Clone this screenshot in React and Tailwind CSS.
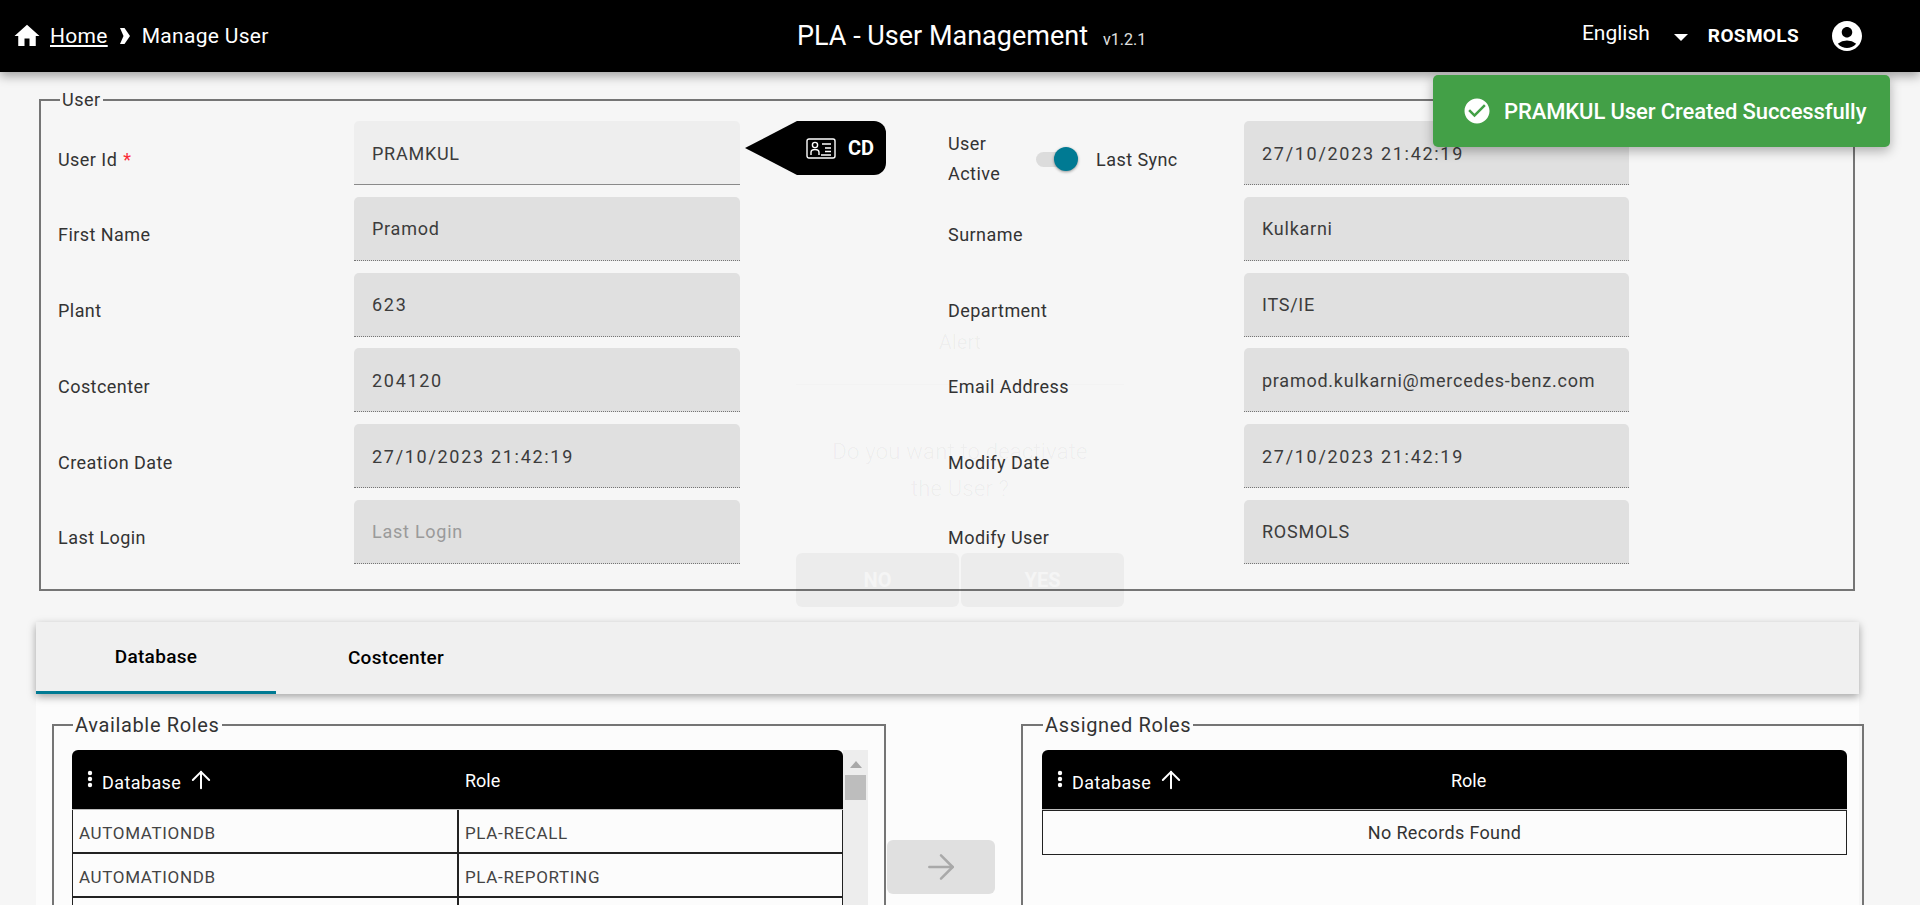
import { ArrowRight, ArrowUp } from "lucide-react";
import { MdAccountCircle, MdCheckCircle, MdHome } from "react-icons/md";

const rows = [
  { left: "First Name", leftValue: "Pramod", right: "Surname", rightValue: "Kulkarni" },
  { left: "Plant", leftValue: "623", right: "Department", rightValue: "ITS/IE" },
  { left: "Costcenter", leftValue: "204120", right: "Email Address", rightValue: "pramod.kulkarni@mercedes-benz.com" },
  { left: "Creation Date", leftValue: "27/10/2023 21:42:19", right: "Modify Date", rightValue: "27/10/2023 21:42:19" },
  { left: "Last Login", leftValue: "", placeholder: "Last Login", right: "Modify User", rightValue: "ROSMOLS" },
];

function Field({ value, placeholder, width, active }) {
  const numeric = /^\d/.test(value || "");
  return (
    <div
      className={`h-[64px] shrink-0 rounded-t-[5px] pl-[18px] pt-[1px] flex items-center text-[18px] ${
        numeric ? "tracking-[1.7px]" : "tracking-[0.75px]"
      } ${width} ${
        active
          ? "bg-[#eeeeee] border-b border-[#8a8a8a]"
          : "bg-[#e0e0e0] border-b border-dotted border-[#757575]"
      } ${value ? "text-[#3c3c3c]" : "text-[#9a9a9a]"}`}
    >
      {value || placeholder}
    </div>
  );
}

function Label({ children }) {
  return (
    <div className="-ml-[1px] mr-[1px] flex w-[295px] shrink-0 items-center pt-[12px] text-[18px] tracking-[0.45px]">
      {children}
    </div>
  );
}

function Kebab() {
  return (
    <svg width="6" height="18" viewBox="0 0 6 18" className="fill-white shrink-0">
      <circle cx="3" cy="3" r="2.2" />
      <circle cx="3" cy="9" r="2.2" />
      <circle cx="3" cy="15" r="2.2" />
    </svg>
  );
}

function IdCard() {
  return (
    <svg width="30" height="21" viewBox="0 0 30 21" fill="none" stroke="white" strokeWidth="1.4">
      <rect x="1" y="1" width="28" height="19" rx="2" />
      <circle cx="9" cy="7" r="2.6" />
      <path d="M5 17v-2.5c0-1.8 1.6-3 4-3s4 1.2 4 3V17" />
      <path d="M16 6h9M19 10h6M19 13.5h6M15 17h10" />
    </svg>
  );
}

function HeaderCell({ children }) {
  return (
    <div className="flex items-center pl-[15px]">
      <Kebab />
      <span className="ml-[9px] mt-[6px] text-[18px] tracking-[0.4px]">{children}</span>
      <ArrowUp size={28} strokeWidth={1.7} className="ml-[6px] mt-[2px]" />
    </div>
  );
}

function App() {
  return (
    <div className="relative h-screen overflow-hidden bg-[#f6f6f6] font-['Roboto',sans-serif] text-[#333333]">
      {/* Top bar */}
      <header className="relative z-10 flex h-[72px] items-center bg-black text-white shadow-[0_4px_10px_rgba(0,0,0,0.35)]">
        <div className="flex w-[797px] shrink-0 items-center pl-[12px] text-[21px] tracking-[0.3px]">
          <MdHome size={30} />
          <a className="ml-[8px] mt-[2px] underline underline-offset-2">Home</a>
          <svg width="12" height="16" viewBox="0 0 12 16" className="ml-[11px] fill-white">
            <path d="M1 0h4.500l5.500 8-5.500 8H1l3.500-8z" />
          </svg>
          <span className="ml-[11px] mt-[2px]">Manage User</span>
        </div>
        <div className="mt-[1px] text-[27px]">PLA - User Management</div>
        <div className="ml-[15px] mt-[8px] text-[16px] text-[#e0e0e0]">v1.2.1</div>
        <div className="ml-auto flex items-center pr-[55px]">
          <span className="-mt-[5px] text-[21px]">English</span>
          <span className="ml-[24px] mt-[2px] h-0 w-0 border-x-[7px] border-t-[7px] border-x-transparent border-t-white" />
          <span className="ml-[20px] text-[19px] tracking-[0.35px] font-bold">ROSMOLS</span>
          <MdAccountCircle size={36} className="ml-[30px]" />
        </div>
      </header>

      <main>
        {/* User details */}
        <fieldset className="ml-[39px] mr-[65px] mt-[16px] border-2 border-[#757575] px-[18px] pb-[25px] pt-[9px]">
          <legend className="ml-[1px] px-[2px] text-[18px] leading-[24px] tracking-[0.5px]">User</legend>

          <div className="flex flex-col gap-[11.8px]">
            <div className="flex h-[64px]">
              <Label>
                User Id <span className="ml-[6px] text-red-500">*</span>
              </Label>
              <Field value="PRAMKUL" width="w-[386px]" active />
              <div className="ml-[5px] flex h-[54px] w-[203px] shrink-0">
                <span className="h-0 w-0 border-y-[27px] border-r-[52px] border-y-transparent border-r-black" />
                <div className="flex h-[54px] w-[89px] items-center rounded-r-[12px] bg-black pl-[9px] text-[20px] font-bold text-white">
                  <IdCard />
                  <span className="ml-[12px]">CD</span>
                </div>
              </div>
              <div className="flex w-[296px] shrink-0 items-center pt-[12px] text-[18px] tracking-[0.45px]">
                <div className="w-[88px] leading-[30px]">
                  User
                  <br />
                  Active
                </div>
                <div className="relative h-[15px] w-[30px]">
                  <div className="h-[15px] w-[30px] rounded-full bg-[#dcdcdc]" />
                  <div className="absolute -top-[5px] left-[18px] h-[24px] w-[24px] rounded-full bg-[#007a93] shadow-[0_1px_3px_rgba(0,0,0,0.4)]" />
                </div>
                <span className="ml-[30px]">Last Sync</span>
              </div>
              <Field value="27/10/2023 21:42:19" width="w-[385px]" />
            </div>

            {rows.map((row) => (
              <div key={row.left} className="flex h-[64px]">
                <Label>{row.left}</Label>
                <Field value={row.leftValue} placeholder={row.placeholder} width="w-[386px]" />
                <div className="w-[208px] shrink-0" />
                <div className="flex w-[296px] shrink-0 items-center pt-[12px] text-[18px] tracking-[0.45px]">{row.right}</div>
                <Field value={row.rightValue} width="w-[385px]" />
              </div>
            ))}
          </div>
        </fieldset>

        {/* Tabs */}
        <div className="relative ml-[36px] mt-[31px] flex h-[72px] w-[1823px] bg-[#f0f0f0] text-[19px] font-medium tracking-[0.3px] text-black shadow-[0_3px_8px_rgba(0,0,0,0.35)]">
          <div className="flex w-[240px] items-center justify-center border-b-[3px] border-[#007a93] pt-[2px]">Database</div>
          <div className="flex w-[240px] items-center justify-center pb-[1px] pt-[1px]">Costcenter</div>
        </div>

        {/* Roles */}
        <div className="ml-[36px] flex h-[300px] w-[1823px] items-start bg-[#fcfcfc] pl-[16px] pt-[19px]">
          <fieldset className="w-[834px] shrink-0 border-2 border-[#757575] pb-[40px] pl-[18px] pr-[16px] pt-[13px]">
            <legend className="ml-[1px] px-[2px] text-[20px] leading-[24px] tracking-[0.65px]">Available Roles</legend>
            <div className="flex">
              <div className="w-[771px] shrink-0">
                <div className="grid h-[60px] grid-cols-[386px_1fr] rounded-t-[6px] border-b border-[#bdbdbd] bg-black text-white">
                  <HeaderCell>Database</HeaderCell>
                  <div className="flex items-center pl-[7px] pt-[3px] text-[18px]">Role</div>
                </div>
                {[
                  ["AUTOMATIONDB", "PLA-RECALL"],
                  ["AUTOMATIONDB", "PLA-REPORTING"],
                  ["\u00a0", "\u00a0"],
                ].map(([db, role], i) => (
                  <div
                    key={i}
                    className="grid h-[44px] grid-cols-[386px_1fr] border-b-2 border-l border-r border-[#222222] pt-[3px] text-[17px] tracking-[0.65px] text-[#444444] first:h-[46px] first:border-t"
                  >
                    <div className="-mt-[3px] flex items-center border-r-2 border-[#222222] pl-[6px] pt-[5px]">{db}</div>
                    <div className="flex items-center pl-[6px] pt-[2px]">{role}</div>
                  </div>
                ))}
              </div>
              <div className="relative h-[200px] w-[25px] shrink-0 bg-[#ededed]">
                <span className="absolute left-[7px] top-[11px] h-0 w-0 border-x-[6px] border-b-[7px] border-x-transparent border-b-[#a8a8a8]" />
                <div className="absolute left-[2px] top-[25px] h-[25px] w-[21px] bg-[#bdbdbd]" />
              </div>
            </div>
          </fieldset>

          <button className="ml-[1px] mt-[127px] flex h-[54px] w-[108px] shrink-0 items-center justify-center rounded-[6px] bg-[#e0e0e0] text-[#a9a9a9]">
            <ArrowRight size={40} strokeWidth={1.5} />
          </button>

          <fieldset className="ml-[26px] w-[843px] shrink-0 border-2 border-[#757575] pb-[60px] pl-[19px] pr-[15px] pt-[13px]">
            <legend className="ml-[1px] px-[2px] text-[20px] leading-[24px] tracking-[0.65px]">Assigned Roles</legend>
            <div className="grid h-[60px] grid-cols-[386px_1fr] rounded-t-[6px] border-b border-[#bdbdbd] bg-black text-white">
              <HeaderCell>Database</HeaderCell>
              <div className="flex items-center justify-start pl-[23px] pt-[3px] text-[18px]">Role</div>
            </div>
            <div className="flex h-[45px] items-center justify-center border border-[#222222] text-[18px] tracking-[0.35px] text-[#333333]">
              No Records Found
            </div>
          </fieldset>
        </div>
      </main>

      {/* Fading alert dialog */}
      <div className="absolute left-[767px] top-[290px] z-20 flex h-[373px] w-[386px] flex-col items-center rounded-[40px] px-[29px] pt-[37px] text-center">
        <div className="text-[20px] text-black/[0.04]">Alert</div>
        <div className="mt-[27px] h-px w-full bg-black/[0.01]" />
        <div className="mt-[48px] w-[280px] text-[22px] font-light leading-[37px] tracking-[0.25px] text-black/[0.05]">
          Do you want to deactivate the User ?
        </div>
        <div className="mt-[46px] flex w-full gap-[2px]">
          <div className="flex h-[54px] flex-1 items-center justify-center rounded-[6px] bg-black/[0.04] text-[20px] font-bold text-white/50">NO</div>
          <div className="flex h-[54px] flex-1 items-center justify-center rounded-[6px] bg-black/[0.04] text-[20px] font-bold text-white/50">YES</div>
        </div>
      </div>

      {/* Toast */}
      <div className="absolute left-[1433px] top-[75px] z-30 flex h-[72px] w-[457px] items-center rounded-[5px] bg-[#43a047] pl-[29px] text-[22px] font-medium tracking-[-0.1px] text-white shadow-[0_4px_12px_rgba(0,0,0,0.3)]">
        <MdCheckCircle size={30} />
        <span className="ml-[12px]">PRAMKUL User Created Successfully</span>
      </div>
    </div>
  );
}

export default App;
